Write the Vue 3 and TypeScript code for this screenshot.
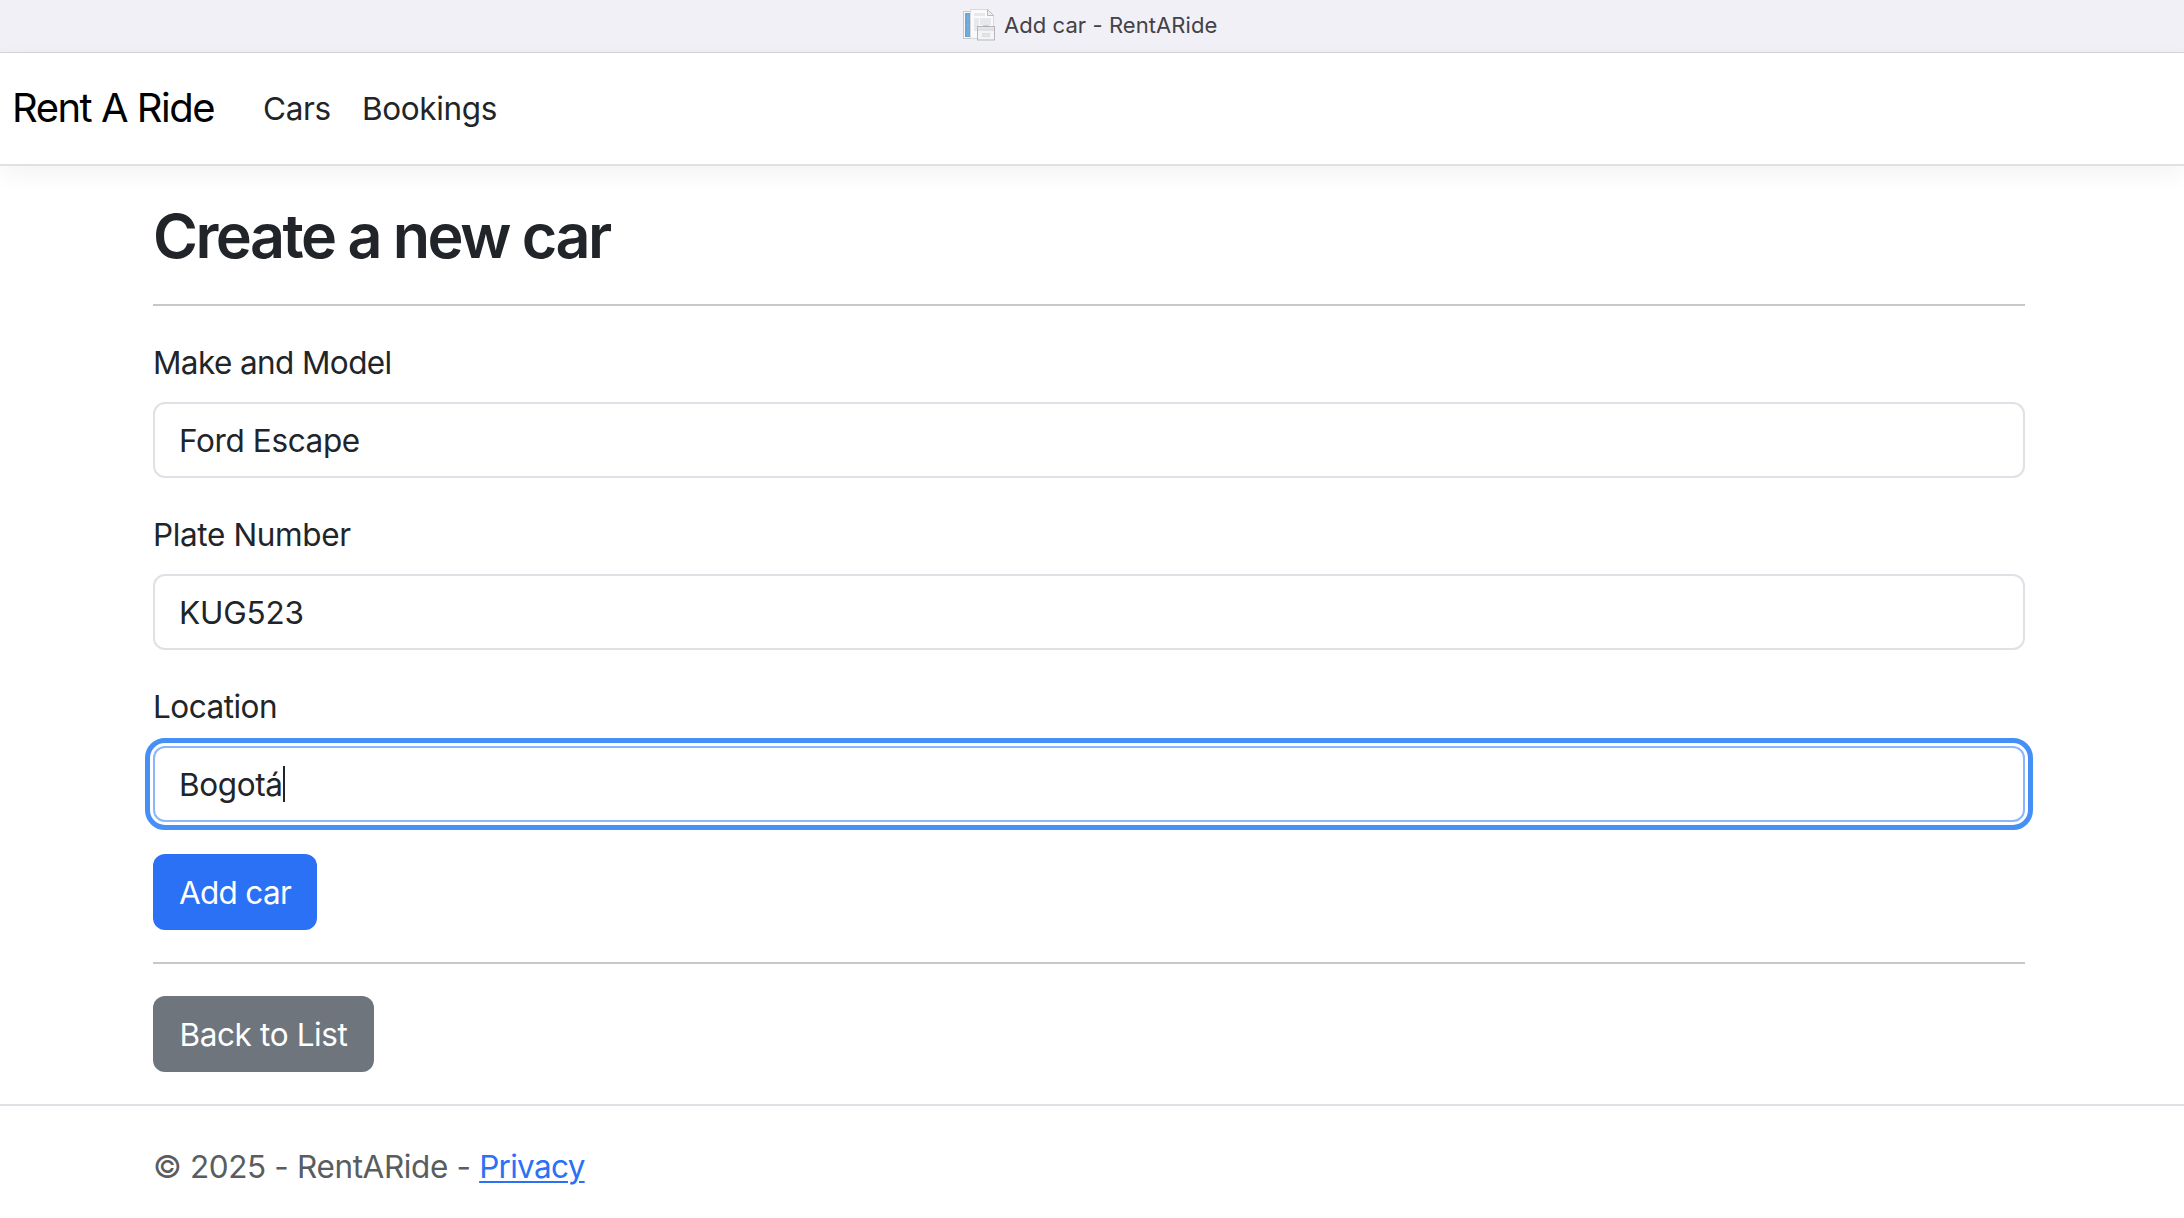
<script setup lang="ts">
interface Field {
  id: string
  label: string
  value: string
  focused: boolean
}

const fields: Field[] = [
  { id: 'make', label: 'Make and Model', value: 'Ford Escape', focused: false },
  { id: 'plate', label: 'Plate Number', value: 'KUG523', focused: false },
  { id: 'location', label: 'Location', value: 'Bogotá', focused: true },
]
</script>

<template>
  <div class="page">
    <div class="tabbar">
      <svg class="favicon" width="32" height="32" viewBox="0 0 32 32">
        <rect x="0.5" y="2.5" width="16" height="27" fill="#f7f8f8" stroke="#c6c9cc" />
        <rect x="2" y="4" width="6" height="24" fill="#6aa5d6" />
        <path d="M3 9h4M3 16h4M5 5v22" stroke="#85b5dd" stroke-width="0.8" />
        <path d="M7.500 0.500h17l6 6v23h-23z" fill="#fafafa" stroke="#d8dadb" />
        <path d="M24.500 0.500v6h6z" fill="#eef0f0" stroke="#b8babc" />
        <path d="M11 4h11v3H11zM11 9h5v13h-5zM17 9h11v7H17z" fill="#e6e8eb" />
        <rect x="14.500" y="17.500" width="17" height="13.500" fill="#f3f4f5" stroke="#b4b7b9" />
        <path d="M15 18h16v2.500H15z" fill="#e3e5e7" />
        <path d="M15 21h16" stroke="#cdd0d2" />
        <path d="M20 17h6" stroke="#a7aaad" />
        <rect x="19.500" y="24.500" width="7" height="3" fill="#e2e4e6" stroke="#dcdee0" />
      </svg>
      <span class="tab-title">Add car - RentARide</span>
    </div>

    <header class="navbar">
      <a class="brand">Rent A Ride</a>
      <a class="nav-link cars">Cars</a>
      <a class="nav-link bookings">Bookings</a>
    </header>

    <main class="container">
      <h2 class="title">Create a new car</h2>
      <hr class="rule" />
      <div v-for="field in fields" :key="field.id" class="group">
        <label :class="['label', field.id]">{{ field.label }}</label>
        <div :class="['control', { focused: field.focused }]">
          <span :class="['value', field.id]">{{ field.value }}</span>
          <span v-if="field.focused" class="caret"></span>
        </div>
      </div>
      <button class="btn primary" type="button">Add car</button>
      <hr class="rule lower" />
      <a class="btn secondary">Back to List</a>
    </main>

    <footer class="footer">
      <span class="copy">© 2025 - RentARide -&nbsp;</span><a class="privacy">Privacy</a>
    </footer>
  </div>
</template>

<style>
body {
  background: #fff;
}
</style>

<style scoped>
.page {
  height: 1218px;
  overflow: hidden;
  display: flex;
  flex-direction: column;
  font-family: Inter, "Liberation Sans", sans-serif;
  font-size: 31.5px;
  line-height: 48px;
  letter-spacing: -0.37px;
  color: #212529;
  background: #fff;
}

.tabbar {
  box-sizing: border-box;
  height: 53px;
  flex: none;
  display: flex;
  align-items: center;
  padding-left: 963px;
  background: #f1f0f6;
  border-bottom: 1px solid #d6d5da;
}

.favicon {
  flex: none;
  margin: 0 9px 2px 0;
}

.tab-title {
  margin-bottom: 2px;
  font-size: 22px;
  line-height: 28px;
  letter-spacing: 0.07px;
  color: #434247;
  white-space: nowrap;
}

.navbar {
  box-sizing: border-box;
  height: 113px;
  flex: none;
  display: flex;
  align-items: center;
  padding-left: 12px;
  border-bottom: 2px solid #dee2e6;
  box-shadow: 0 8px 24px rgba(0, 0, 0, 0.05);
}

.brand {
  width: 251px;
  margin-bottom: 2px;
  font-size: 40px;
  letter-spacing: -1.5px;
  color: #000;
  white-space: nowrap;
}

.nav-link {
  white-space: nowrap;
}

.nav-link.cars {
  width: 99px;
}

.container {
  flex: none;
  width: 1872px;
  margin-left: 153px;
  padding-top: 32px;
}

.title {
  margin: 0;
  height: 77px;
  font-size: 61px;
  font-weight: 600;
  line-height: 77px;
  letter-spacing: -2.5px;
  white-space: nowrap;
}

.rule {
  height: 2px;
  margin: 29px 0 32px;
  border: 0;
  background: #c8c8c9;
}

.group {
  margin-bottom: 32px;
}

.label {
  display: block;
  height: 48px;
  margin-bottom: 16px;
  line-height: 50px;
  white-space: nowrap;
}

.label.make {
  letter-spacing: -0.6px;
}

.label.location {
  letter-spacing: -0.5px;
}

.value.plate {
  letter-spacing: -0.2px;
}

.control {
  box-sizing: border-box;
  height: 76px;
  display: flex;
  align-items: center;
  padding: 2px 0 0 24px;
  border: 2px solid #dee2e6;
  border-radius: 12px;
}

.control.focused {
  border-color: #8bb6fb;
  outline: 5px solid #458ff6;
  outline-offset: 3px;
}

.caret {
  width: 2px;
  height: 36px;
  margin-bottom: 2px;
  background: #212529;
}

.btn {
  box-sizing: border-box;
  display: flex;
  align-items: center;
  justify-content: center;
  height: 76px;
  padding: 2px 0 0;
  border: 0;
  border-radius: 12px;
  font: inherit;
  color: #fff;
  white-space: nowrap;
}

.btn.primary {
  width: 164px;
  letter-spacing: -0.7px;
  background: #2b71f5;
}

.btn.secondary {
  width: 221px;
  background: #6e757d;
}

.rule.lower {
  margin: 32px 0;
}

.footer {
  flex: none;
  display: flex;
  align-items: center;
  height: 122px;
  margin-top: 32px;
  padding-left: 153px;
  border-top: 2px solid #dee2e6;
  color: #595d60;
}

.privacy {
  letter-spacing: -0.7px;
  color: #2b71f5;
  text-decoration: underline;
  text-decoration-thickness: 2px;
  text-underline-offset: 3px;
}
</style>
